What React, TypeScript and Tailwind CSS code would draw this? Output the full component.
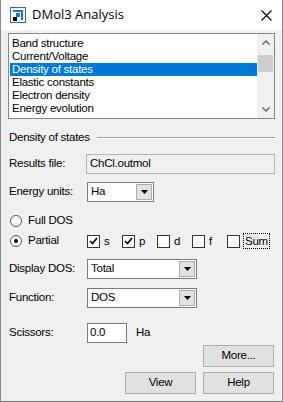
import React from "react";

const font = { fontFamily: '"Liberation Sans", Arial, sans-serif' };

const items = [
  "Band structure",
  "Current/Voltage",
  "Density of states",
  "Elastic constants",
  "Electron density",
  "Energy evolution",
];

const Arrow = () => (
  <div className="w-[16px] h-[16px] bg-[#e1e1e1] border border-[#adadad] flex items-center justify-center">
    <svg width="7" height="4" viewBox="0 0 7 4">
      <path d="M0 0h7L3.5 4z" fill="#000" />
    </svg>
  </div>
);

const Select = ({ value, w }: { value: string; w: string }) => (
  <div className={`${w} h-[20px] bg-white border border-[#7a7a7a] flex items-center justify-between pl-[3px] pr-[1px]`}>
    <span>{value}</span>
    <Arrow />
  </div>
);

const Check = ({ checked, label, focus }: { checked?: boolean; label: string; focus?: boolean }) => (
  <div className="w-[35px] flex items-center gap-[4px]">
    <div className="w-[13px] h-[13px] bg-white border border-[#333] flex items-center justify-center shrink-0">
      {checked && (
        <svg width="9" height="8" viewBox="0 0 9 8">
          <path d="M1 4l2.5 2.5L8 1" stroke="#000" strokeWidth="1.6" fill="none" />
        </svg>
      )}
    </div>
    <span className={focus ? "outline outline-1 outline-dotted outline-black px-[1px] leading-[14px]" : "leading-[14px]"}>{label}</span>
  </div>
);

const Radio = ({ checked, label }: { checked?: boolean; label: string }) => (
  <div className="flex items-center gap-[6px]">
    <div className="w-[12px] h-[12px] rounded-full bg-white border border-[#555] flex items-center justify-center">
      {checked && <div className="w-[4px] h-[4px] rounded-full bg-black" />}
    </div>
    <span>{label}</span>
  </div>
);

const Button = ({ label }: { label: string }) => (
  <div className="w-[71px] h-[22px] bg-[#e1e1e1] border border-[#adadad] flex items-center justify-center">
    {label}
  </div>
);

export default function App() {
  return (
    <div style={font} className="w-[283px] h-[402px] bg-[#f0f0f0] text-[11.5px] tracking-[-0.25px] text-black flex flex-col border-l border-r border-[#8a8a8a] overflow-hidden">
      <div className="h-[30px] bg-white flex items-center justify-between pl-[9px] pr-[10px] shrink-0 tracking-normal">
        <div className="flex items-center gap-[6px]">
          <svg width="16" height="16" viewBox="0 0 16 16">
            <rect x="0" y="0" width="16" height="16" fill="#1e73c8" />
            <rect x="1" y="1" width="14" height="14" fill="#ffffff" />
            <path d="M3 3h10v10h-2V5H3z" fill="#1e73c8" />
            <path d="M6 6h4v4H6z" fill="#1e73c8" />
            <rect x="3" y="10" width="4" height="4" fill="#000" />
          </svg>
          <span className="text-[13px]" style={{ fontFamily: '"Open Sans", "Liberation Sans", sans-serif' }}>DMol3 Analysis</span>
        </div>
        <svg width="11" height="11" viewBox="0 0 11 11">
          <path d="M0.5 0.5l10 10M10.5 0.5l-10 10" stroke="#000" strokeWidth="1.1" />
        </svg>
      </div>

      <div className="px-[7px] flex flex-col flex-1">
        <div className="mt-[3px] h-[86px] bg-white border border-[#828790] flex shrink-0">
          <div className="flex-1 pt-[3px] pl-[1px]">
            {items.map((it, i) => (
              <div
                key={it}
                className={`h-[13px] leading-[13px] pl-[2px] ${i === 2 ? "bg-[#0078d7] text-white" : ""}`}
              >
                {it}
              </div>
            ))}
          </div>
          <div className="w-[17px] bg-[#f0f0f0] flex flex-col">
            <div className="h-[17px] flex items-center justify-center">
              <svg width="8" height="5" viewBox="0 0 8 5">
                <path d="M0.5 4.5L4 1l3.5 3.5" stroke="#606060" strokeWidth="1.3" fill="none" />
              </svg>
            </div>
            <div className="flex-1 pt-[4px] px-[1px]">
              <div className="h-[17px] bg-[#cdcdcd]" />
            </div>
            <div className="h-[17px] flex items-center justify-center">
              <svg width="8" height="5" viewBox="0 0 8 5">
                <path d="M0.5 0.5L4 4l3.5-3.5" stroke="#606060" strokeWidth="1.3" fill="none" />
              </svg>
            </div>
          </div>
        </div>

        <div className="mt-[12px] h-[14px] flex items-center gap-[7px] pl-[1px]">
          <span>Density of states</span>
          <div className="flex-1 h-[2px] border-t border-[#a0a0a0] border-b border-b-white" />
        </div>

        <div className="mt-[9px] flex items-center pl-[1px]">
          <span className="w-[77px]">Results file:</span>
          <div className="flex-1 h-[20px] bg-[#f0f0f0] border border-[#b4b4b4] flex items-center pl-[3px]">ChCl.outmol</div>
        </div>

        <div className="mt-[8px] flex items-center pl-[1px]">
          <span className="w-[78px]">Energy units:</span>
          <Select value="Ha" w="w-[67px]" />
        </div>

        <div className="mt-[12px] h-[14px] flex items-center pl-[2px]">
          <Radio label="Full DOS" />
        </div>
        <div className="mt-[5px] h-[16px] flex items-center pl-[2px]">
          <div className="w-[77px]">
            <Radio checked label="Partial" />
          </div>
          <Check checked label="s" />
          <Check checked label="p" />
          <Check label="d" />
          <Check label="f" />
          <Check label="Sum" focus />
        </div>

        <div className="mt-[10px] flex items-center pl-[1px]">
          <span className="w-[78px]">Display DOS:</span>
          <Select value="Total" w="w-[110px]" />
        </div>

        <div className="mt-[9px] flex items-center pl-[1px]">
          <span className="w-[78px]">Function:</span>
          <Select value="DOS" w="w-[110px]" />
        </div>

        <div className="mt-[15px] flex items-center pl-[1px]">
          <span className="w-[78px]">Scissors:</span>
          <div className="w-[40px] h-[20px] bg-white border border-[#7a7a7a] pl-[2px] flex items-center">0.0</div>
          <span className="ml-[9px]">Ha</span>
        </div>

        <div className="mt-[2px] flex justify-end pr-[1px]">
          <Button label="More..." />
        </div>
        <div className="mt-[5px] flex justify-end gap-[7px] pr-[1px]">
          <Button label="View" />
          <Button label="Help" />
        </div>
        <div className="flex-1" />
      </div>
      <div className="h-[3px] bg-[#f0f0f0] border-b border-[#6d6d6d] shrink-0" />
    </div>
  );
}
